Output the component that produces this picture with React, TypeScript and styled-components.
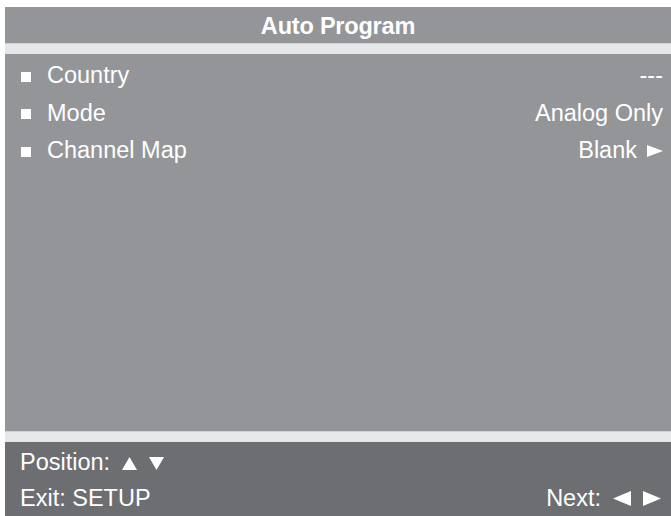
import React from 'react';
import styled, { createGlobalStyle } from 'styled-components';

const GlobalStyle = createGlobalStyle`
	html, body {
		margin: 0;
		padding: 0;
		background: #ffffff;
	}
	body {
		font-family: 'Liberation Sans', Arial, sans-serif;
	}
`;

const ROWS = [
	{ id: 'country', label: 'Country', value: '---', arrow: false },
	{ id: 'mode', label: 'Mode', value: 'Analog Only', arrow: false },
	{ id: 'channel-map', label: 'Channel Map', value: 'Blank', arrow: true },
];

type Dir = 'up' | 'down' | 'left' | 'right';

const TRIANGLES: Record<Dir, string> = {
	up: '8,0 16,14 0,14',
	down: '0,0 16,0 8,14',
	left: '16,0 16,14 0,7',
	right: '0,0 16,7 0,14',
};

const Triangle = ({ dir, w = 16, h = 14 }: { dir: Dir; w?: number; h?: number }) => (
	<Arrow width={w} height={h} viewBox="0 0 16 14" preserveAspectRatio="none">
		<polygon points={TRIANGLES[dir]} fill="#ffffff" />
	</Arrow>
);

const App = () => (
	<>
		<GlobalStyle />
		<Screen>
			<TitleBar>Auto Program</TitleBar>
			<Band />
			<Body>
				{ROWS.map(({ id, label, value, arrow }) => (
					<Row key={id}>
						<Label>
							<Bullet />
							{label}
						</Label>
						<Value>
							{value}
							{arrow && <Triangle dir="right" w={16} h={12} />}
						</Value>
					</Row>
				))}
			</Body>
			<Band />
			<Footer>
				<FooterRow>
					<Hint>
						Position:
						<Triangle dir="up" w={15} h={13} />
						<Triangle dir="down" w={15} h={13} />
					</Hint>
				</FooterRow>
				<FooterRow>
					<Hint>Exit: SETUP</Hint>
					<Hint>
						Next:
						<Triangle dir="left" w={18} h={15} />
						<Triangle dir="right" w={18} h={15} />
					</Hint>
				</FooterRow>
			</Footer>
		</Screen>
	</>
);

const Screen = styled.div`
	display: flex;
	flex-direction: column;
	margin: 7px 0 0 5px;
	width: 666px;
	height: 509px;
	color: #ffffff;
	font-size: 23.5px;
`;

const TitleBar = styled.div`
	height: 36px;
	line-height: 38px;
	background: #939598;
	text-align: center;
	font-weight: bold;
	letter-spacing: -0.2px;
`;

const Band = styled.div`
	height: 11px;
	background: #e6e7e8;
	border-top: 1px solid #d1d2d4;
	box-sizing: border-box;
`;

const Body = styled.div`
	flex: 1;
	background: #939598;
	padding-top: 3px;
`;

const Row = styled.div`
	display: flex;
	justify-content: space-between;
	align-items: center;
	height: 37.5px;
	padding: 0 8px 0 16px;
`;

const Label = styled.div`
	display: flex;
	align-items: center;
`;

const Bullet = styled.span`
	width: 10px;
	height: 10px;
	background: #ffffff;
	margin: 2px 16px 0 0;
`;

const Value = styled.div`
	display: flex;
	align-items: center;
	gap: 10px;
`;

const Arrow = styled.svg`
	display: block;
	margin-top: 1px;
`;

const Footer = styled.div`
	height: 74px;
	background: #6d6e71;
	display: flex;
	flex-direction: column;
	padding-top: 3px;
	box-sizing: border-box;
`;

const FooterRow = styled.div`
	display: flex;
	justify-content: space-between;
	align-items: center;
	height: 36px;
	padding: 0 10px 0 15px;
`;

const Hint = styled.div`
	display: flex;
	align-items: center;
	gap: 12px;
`;

export default App;
